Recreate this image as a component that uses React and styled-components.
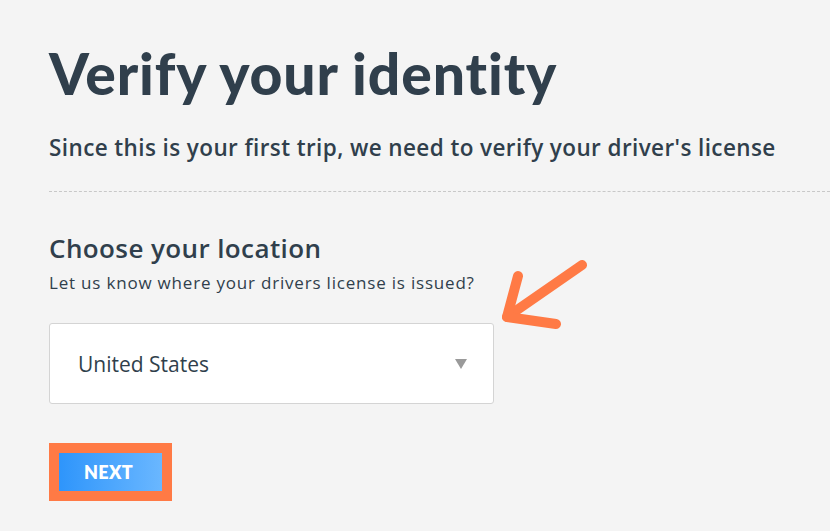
import React from "react";
import styled, { createGlobalStyle } from "styled-components";

const Global = createGlobalStyle`
  html, body { margin: 0; padding: 0; background: #f4f4f4; }
  body { font-family: "Open Sans", Lato, sans-serif; color: #303f4c; }
  * { box-sizing: border-box; }
`;

const Page = styled.main`
  position: relative;
  width: 830px;
  height: 531px;
  overflow: hidden;
  padding: 38px 0 0 49px;
`;

const Title = styled.h1`
  margin: 0;
  font-family: Lato, sans-serif;
  font-size: 57px;
  line-height: 70px;
  font-weight: 900;
  letter-spacing: 0.9px;
  color: #303f4c;
`;

const Lead = styled.p`
  margin: 26px 0 0;
  font-size: 22.5px;
  line-height: 28px;
  font-weight: 600;
  letter-spacing: 0.4px;
  color: #303f4c;
`;

const Divider = styled.hr`
  margin: 29px 0 0;
  border: 0;
  border-top: 1px dashed #c8c8c8;
  height: 0;
`;

const Section = styled.section`
  display: flex;
  flex-direction: column;
  padding-top: 41px;
`;

const SectionTitle = styled.h2`
  margin: 0;
  font-size: 26px;
  line-height: 30px;
  font-weight: 600;
  letter-spacing: 0.4px;
  color: #303f4c;
`;

const Hint = styled.p`
  margin: 9px 0 0;
  font-size: 17px;
  line-height: 22px;
  font-weight: 400;
  letter-spacing: 0.8px;
  color: #303f4c;
`;

const Select = styled.div`
  margin-top: 29px;
  width: 445px;
  height: 81px;
  background: #fff;
  border: 1px solid #d4d4d4;
  border-radius: 3px;
  display: flex;
  align-items: center;
  justify-content: space-between;
  padding: 0 26px 0 28px;
  font-size: 21px;
  color: #303f4c;
`;

const Caret = styled.span`
  width: 0;
  height: 0;
  border-left: 6px solid transparent;
  border-right: 6px solid transparent;
  border-top: 10px solid #9a9a9a;
`;

const Highlight = styled.div`
  margin-top: 39px;
  align-self: flex-start;
  padding: 10px;
  background: #ff7a45;
`;

const NextButton = styled.button`
  width: 103px;
  height: 38px;
  border: 0;
  margin: 0;
  padding: 0 4px 0 0;
  display: flex;
  align-items: center;
  justify-content: center;
  background: linear-gradient(90deg, #2e95fb 0%, #6ab7ff 100%);
  color: #fff;
  font-family: Lato, sans-serif;
  font-weight: 800;
  font-size: 18px;
  letter-spacing: 0.3px;
`;

const Arrow = styled.svg`
  position: absolute;
  left: 495px;
  top: 255px;
`;

export default function App() {
  return (
    <>
      <Global />
      <Page>
        <Title>Verify your identity</Title>
        <Lead>Since this is your first trip, we need to verify your driver's license</Lead>
        <Divider />
        <Section>
          <SectionTitle>Choose your location</SectionTitle>
          <Hint>Let us know where your drivers license is issued?</Hint>
          <Select>
            <span>United States</span>
            <Caret />
          </Select>
          <Highlight>
            <NextButton>NEXT</NextButton>
          </Highlight>
        </Section>
        <Arrow width="100" height="80" viewBox="495 255 100 80">
          <g stroke="#ff7a45" strokeWidth="10" strokeLinecap="round" strokeLinejoin="round" fill="none">
            <line x1="582" y1="265" x2="507" y2="317" />
            <polyline points="518,276 507,317 556,324" />
          </g>
        </Arrow>
      </Page>
    </>
  );
}
